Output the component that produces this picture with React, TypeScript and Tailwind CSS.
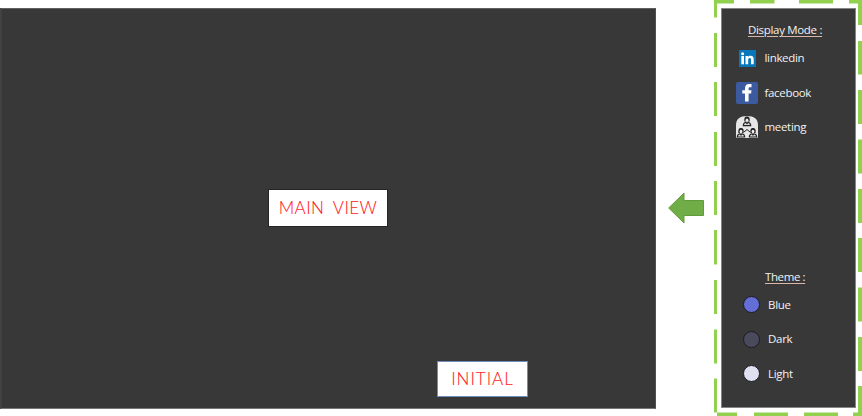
import type { ReactNode } from 'react';

const LinkedinIcon = () => (
  <svg width="17" height="17" viewBox="0 0 17 17" className="shrink-0">
    <rect width="17" height="17" fill="#0877b9" />
    <g fill="#fff">
      <circle cx="3.600" cy="3.700" r="1.500" />
      <rect x="2.300" y="6" width="2.700" height="8.300" />
      <path d="M6.500 6h2.500v1.100c.5-.8 1.300-1.300 2.600-1.300 2.300 0 3.100 1.500 3.100 3.700v4.800H12v-4.300c0-1.200-.2-1.900-1.300-1.900S9.200 8.900 9.200 10v4.300H6.500z" />
    </g>
  </svg>
);

const FacebookIcon = () => (
  <svg width="22" height="22" viewBox="0 0 22 22" className="shrink-0">
    <rect width="22" height="22" rx="2" fill="#3b5aa0" />
    <path d="M9 19.500v-8H6.300V8.200H9V6.200C9 3.600 10.600 2 13 2h2.500v3.200h-1.600c-1 0-1.300.5-1.300 1.300v1.700h2.900l-.4 3.300h-2.500v8z" fill="#fff" />
  </svg>
);

const Attendee = ({ x, y }: { x: number; y: number }) => (
  <g transform={`translate(${x} ${y})`}>
    <path d="M-2.600 2C-3-2.200-1.800-3 0-3S3-2.200 2.600 2z" fill="#202020" />
    <ellipse cx="0" cy=".6" rx="1.400" ry="1.800" fill="#eee" />
    <path d="M-3.700 6C-3.700 3.500-2.500 3-1 2.700L0 4l1-1.300C2.500 3 3.700 3.500 3.700 6z" fill="#ddd" stroke="#202020" strokeWidth="1.100" />
  </g>
);

const MeetingIcon = () => (
  <svg width="22" height="22" viewBox="0 0 22 22" className="shrink-0">
    <path d="M0 21V9C0 3 4 0 11 0s11 3 11 9v12q0 1-1 1H1q-1 0-1-1z" fill="#e6e6e6" />
    <Attendee x={11} y={3.6} />
    <path d="M8 16l3-2.500 3 2.500" fill="none" stroke="#202020" strokeWidth="1" />
    <Attendee x={5} y={15} />
    <Attendee x={17} y={15} />
  </svg>
);

const Row = ({ icon, label }: { icon: ReactNode; label: string }) => (
  <div className="flex h-[34.500px] items-center">
    <div className="flex w-[22px] justify-center">{icon}</div>
    <span className="ml-[6.500px] text-[11.500px] leading-4 tracking-[-0.320px]">{label}</span>
  </div>
);

const ThemeRow = ({ color, label }: { color: string; label: string }) => (
  <div className="flex h-[34.500px] items-center gap-2">
    <span className={`size-[17px] rounded-full border border-[#1b1b20] ${color}`} />
    <span className="text-[11.500px] leading-4 tracking-[-0.300px]">{label}</span>
  </div>
);

const DashedFrame = () => (
  <svg width="148" height="416" viewBox="0 0 148 416" className="absolute top-0 left-0" fill="none" stroke="#92d14f">
    <path strokeWidth="3" d="M1.500 0V17.500M1.500 33v34M1.500 82v34M1.500 132v34M1.500 181v34M1.500 230v34.500M1.500 280v34M1.500 329.500v34M1.500 378.500v34" />
    <path strokeWidth="3.500" d="M0 1.700H20M36 1.700h24.500M85 1.700h34M135 1.700h13" />
    <path strokeWidth="4" d="M146 0v25M146 41v33.500M146 90v34M146 139.500v34M146 189v34M146 238v34M146 287.500v34M146 337v34M146 386v27" />
    <path strokeWidth="3.500" d="M3 414.300h20M40 414.300h34M90 414.300h34M139 414.300h9" />
  </svg>
);

export default function App() {
  return (
    <div className="flex h-[416px] w-[862px] overflow-hidden bg-white font-['Open_Sans','Noto_Sans',sans-serif]">
      <main className="mt-2 flex h-[401px] w-[656px] flex-col border-t border-r border-b border-l-2 border-t-[#606060] border-r-[#35566f] border-b-[#777] border-l-[#424242] bg-[#383838] font-['Lato',sans-serif] font-light text-[#ff2020]">
        <div className="mt-[180px] ml-[266px] flex h-[38px] w-[120px] items-center justify-center border border-[#252525] bg-white text-[17px] tracking-[0.450px] [-webkit-text-stroke:0.100px]">
          <span className="whitespace-nowrap [word-spacing:4px]">MAIN VIEW</span>
        </div>
        <div className="mt-[134px] ml-[435px] flex h-[36px] w-[91px] items-center justify-center border border-[#6f8dbb] bg-white text-[17px] tracking-[1px] [-webkit-text-stroke:0.100px]">
          <span>INITIAL</span>
        </div>
      </main>

      <div className="flex w-[58px] items-center pl-[12px]">
        <svg width="37" height="32" viewBox="0 0 37 32">
          <path d="M.7 16L16 1v7.500h19.500v15H16V31z" fill="#70ad47" stroke="#629a3c" />
        </svg>
      </div>

      <aside className="relative h-[416px] w-[148px] pt-2 pl-[7px]">
        <DashedFrame />
        <div className="flex h-[400px] w-[135px] flex-col border border-[#858585] bg-[#383838] text-[#f2f2f2]">
          <h2 className="mt-[13px] ml-[26px] w-fit text-[11.500px] leading-4 tracking-[-0.320px] whitespace-nowrap underline decoration-[#d8b6a8] underline-offset-2">Display Mode :</h2>
          <div className="mt-[3px] ml-[14px]">
            <Row icon={<LinkedinIcon />} label="linkedin" />
            <Row icon={<FacebookIcon />} label="facebook" />
            <Row icon={<MeetingIcon />} label="meeting" />
          </div>
          <h2 className="mt-[124px] ml-[43px] w-fit text-[11.500px] leading-4 tracking-[-0.400px] whitespace-nowrap underline decoration-[#d8b6a8] underline-offset-2">Theme :</h2>
          <div className="mt-[3px] ml-[21px]">
            <ThemeRow color="bg-[#636fd6]" label="Blue" />
            <ThemeRow color="bg-[#494b5d]" label="Dark" />
            <ThemeRow color="bg-[#dfe0f2]" label="Light" />
          </div>
        </div>
      </aside>
    </div>
  );
}
